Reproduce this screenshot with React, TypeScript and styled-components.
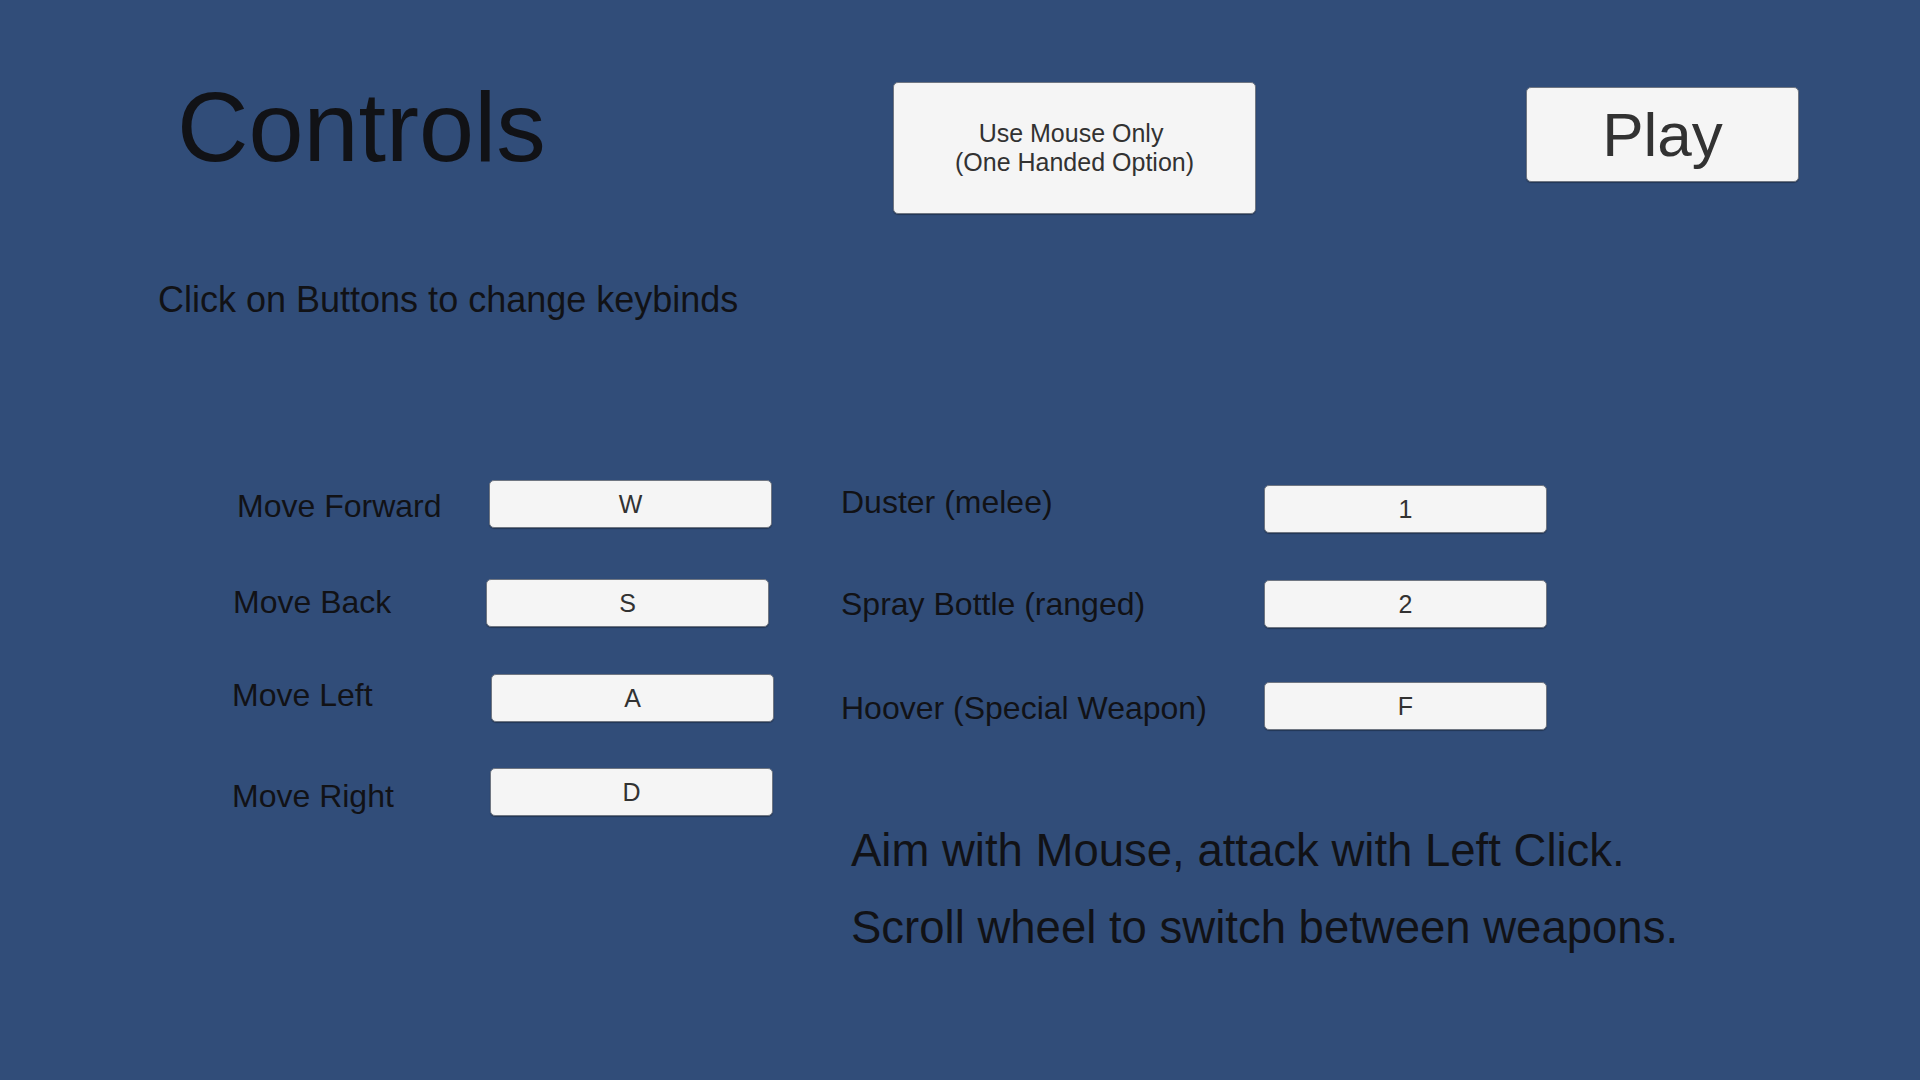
import styled, { createGlobalStyle } from 'styled-components';

const GlobalStyle = createGlobalStyle`
  html, body {
    margin: 0;
    padding: 0;
    background: #314d79;
  }
  * {
    box-sizing: border-box;
  }
`;

type TBinding = {
  label: string;
  keyName: string;
  gap: number;
  labelTop: number;
  labelLeft?: number;
  keyLeft?: number;
};

const movement: TBinding[] = [
  { label: 'Move Forward', keyName: 'W', gap: 0, labelTop: 10, labelLeft: 7, keyLeft: 3 },
  { label: 'Move Back', keyName: 'S', gap: 51, labelTop: 7, labelLeft: 3, keyLeft: 0 },
  { label: 'Move Left', keyName: 'A', gap: 47, labelTop: 5, labelLeft: 2, keyLeft: 5 },
  { label: 'Move Right', keyName: 'D', gap: 46, labelTop: 12, labelLeft: 2, keyLeft: 4 },
];

const weapons: TBinding[] = [
  { label: 'Duster (melee)', keyName: '1', gap: 0, labelTop: 1, labelLeft: 3 },
  { label: 'Spray Bottle (ranged)', keyName: '2', gap: 47, labelTop: 8, labelLeft: 3 },
  { label: 'Hoover (Special Weapon)', keyName: 'F', gap: 54, labelTop: 10, labelLeft: 3 },
];

const BindingRow = ({ label, keyName, gap, labelTop, labelLeft = 0, keyLeft = 0 }: TBinding) => (
  <Row $gap={gap}>
    <Label $top={labelTop} $left={labelLeft}>
      {label}
    </Label>
    <KeyButton $left={keyLeft}>{keyName}</KeyButton>
  </Row>
);

export default function App() {
  return (
    <>
      <GlobalStyle />
      <Page>
        <Header>
          <Title>Controls</Title>
          <MouseButton>{'Use Mouse Only \n(One Handed Option)'}</MouseButton>
          <PlayButton>Play</PlayButton>
        </Header>

        <Hint>Click on Buttons to change keybinds</Hint>

        <Bindings>
          <MoveColumn>
            {movement.map((b) => (
              <BindingRow key={b.label} {...b} />
            ))}
          </MoveColumn>
          <WeaponColumn>
            {weapons.map((b) => (
              <BindingRow key={b.label} {...b} />
            ))}
            <Notes>
              <p>Aim with Mouse, attack with Left Click.</p>
              <p>Scroll wheel to switch between weapons.</p>
            </Notes>
          </WeaponColumn>
        </Bindings>
      </Page>
    </>
  );
}

const Page = styled.main`
  width: 1920px;
  height: 1080px;
  overflow: hidden;
  background: #314d79;
  font-family: 'Liberation Sans', Arial, sans-serif;
  color: #111216;
`;

const Header = styled.header`
  display: flex;
  align-items: flex-start;
  padding-left: 177px;
`;

const Title = styled.h1`
  margin: 77px 0 0;
  width: 716px;
  font-size: 99px;
  font-weight: 400;
  line-height: 1;
`;

const PanelButton = styled.button`
  display: flex;
  align-items: center;
  justify-content: center;
  background: #f5f5f5;
  border: 1px solid #6f7682;
  border-radius: 5px;
  box-shadow: 0 1px 1px rgba(0, 0, 0, 0.3);
  color: #323232;
  font-family: 'Liberation Sans', Arial, sans-serif;
  padding: 0;
  cursor: pointer;
`;

const MouseButton = styled(PanelButton)`
  margin-top: 82px;
  width: 363px;
  height: 132px;
  font-size: 25px;
  line-height: 29px;
  white-space: pre;
  text-align: center;
`;

const PlayButton = styled(PanelButton)`
  margin: 87px 0 0 270px;
  width: 273px;
  height: 95px;
  font-size: 62px;
  line-height: 1;
`;

const Hint = styled.p`
  margin: 68px 0 0 158px;
  font-size: 36px;
  line-height: 1;
`;

const Bindings = styled.section`
  display: flex;
  margin-top: 162px;
  padding-left: 230px;
`;

const MoveColumn = styled.div`
  width: 608px;
  display: flex;
  flex-direction: column;
`;

const WeaponColumn = styled.div`
  margin-top: 5px;
  display: flex;
  flex-direction: column;
`;

const Row = styled.div<{ $gap: number }>`
  display: flex;
  align-items: flex-start;
  height: 48px;
  margin-top: ${(p) => p.$gap}px;

  ${WeaponColumn} & > span {
    width: 426px;
  }
`;

const Label = styled.span<{ $top: number; $left: number }>`
  width: 256px;
  margin-top: ${(p) => p.$top}px;
  padding-left: ${(p) => p.$left}px;
  font-size: 32px;
  line-height: 1;
  white-space: nowrap;
`;

const KeyButton = styled(PanelButton)<{ $left: number }>`
  margin-left: ${(p) => p.$left}px;
  width: 283px;
  height: 48px;
  font-size: 25px;
  line-height: 1;
`;

const Notes = styled.div`
  margin: 82px 0 0 13px;
  p {
    margin: 0;
    font-size: 45.5px;
    line-height: 77px;
    white-space: nowrap;
  }
`;
